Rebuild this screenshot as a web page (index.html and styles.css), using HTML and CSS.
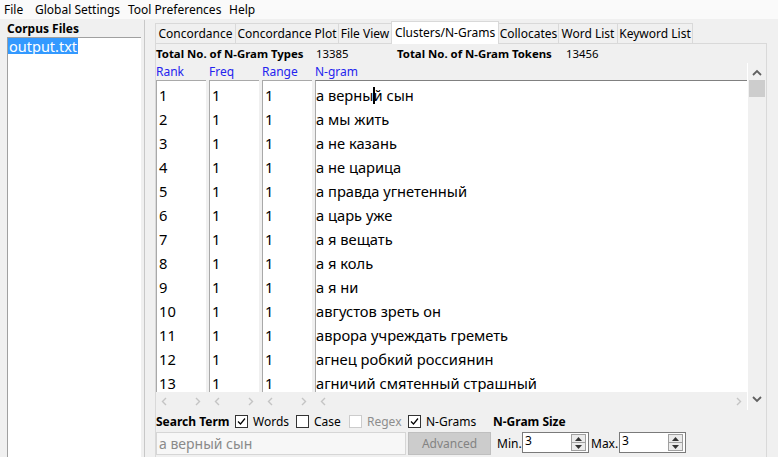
FILE: index.html
```html
<!DOCTYPE html>
<html>
<head>
<meta charset="utf-8">
<link rel="stylesheet" href="styles.css">
</head>
<body>
<div class="menubar">
  <span class="menu m-file">File</span>
  <span class="menu m-global">Global Settings</span>
  <span class="menu m-tool">Tool Preferences</span>
  <span class="menu m-help">Help</span>
</div>
<div class="main">
  <aside class="corpus">
    <div class="corpus-title">Corpus Files</div>
    <div class="corpus-list"><span class="corpus-sel">output.txt</span></div>
  </aside>
  <div class="splitter"></div>
  <section class="work">
    <nav class="tabs">
      <div class="tab t1">Concordance</div>
      <div class="tab t2">Concordance Plot</div>
      <div class="tab t3">File View</div>
      <div class="tab t4 active">Clusters/N-Grams</div>
      <div class="tab t5">Collocates</div>
      <div class="tab t6">Word List</div>
      <div class="tab t7">Keyword List</div>
    </nav>
    <div class="panel">
      <div class="totals">
        <span class="b">Total No. of N-Gram Types</span>
        <span>13385</span>
        <span class="b">Total No. of N-Gram Tokens</span>
        <span>13456</span>
      </div>
      <div class="table">
        <div class="cols">
          <div class="heads">
            <span>Rank</span><span>Freq</span><span>Range</span><span>N-gram</span>
          </div>
          <div class="boxes">
            <div class="box num">
              <div>1</div><div>2</div><div>3</div><div>4</div><div>5</div><div>6</div><div>7</div><div>8</div><div>9</div><div>10</div><div>11</div><div>12</div><div>13</div>
            </div>
            <div class="box num">
              <div>1</div><div>1</div><div>1</div><div>1</div><div>1</div><div>1</div><div>1</div><div>1</div><div>1</div><div>1</div><div>1</div><div>1</div><div>1</div>
            </div>
            <div class="box num">
              <div>1</div><div>1</div><div>1</div><div>1</div><div>1</div><div>1</div><div>1</div><div>1</div><div>1</div><div>1</div><div>1</div><div>1</div><div>1</div>
            </div>
            <div class="box text">
              <div>а верны<span class="caret"></span>й сын</div>
              <div>а мы жить</div>
              <div>а не казань</div>
              <div>а не царица</div>
              <div>а правда угнетенный</div>
              <div>а царь уже</div>
              <div>а я вещать</div>
              <div>а я коль</div>
              <div>а я ни</div>
              <div>августов зреть он</div>
              <div>аврора учреждать греметь</div>
              <div>агнец робкий россиянин</div>
              <div>агничий смятенный страшный</div>
            </div>
          </div>
          <div class="hscroll">
            <div class="hs"><svg width="6" height="9" viewBox="0 0 6 9"><polyline points="5,1 1.5,4.5 5,8" fill="none" stroke="#c4c4c4" stroke-width="1.4"/></svg><svg width="6" height="9" viewBox="0 0 6 9"><polyline points="1,1 4.5,4.5 1,8" fill="none" stroke="#c4c4c4" stroke-width="1.4"/></svg></div>
            <div class="hs"><svg width="6" height="9" viewBox="0 0 6 9"><polyline points="5,1 1.5,4.5 5,8" fill="none" stroke="#c4c4c4" stroke-width="1.4"/></svg><svg width="6" height="9" viewBox="0 0 6 9"><polyline points="1,1 4.5,4.5 1,8" fill="none" stroke="#c4c4c4" stroke-width="1.4"/></svg></div>
            <div class="hs"><svg width="6" height="9" viewBox="0 0 6 9"><polyline points="5,1 1.5,4.5 5,8" fill="none" stroke="#c4c4c4" stroke-width="1.4"/></svg><svg width="6" height="9" viewBox="0 0 6 9"><polyline points="1,1 4.5,4.5 1,8" fill="none" stroke="#c4c4c4" stroke-width="1.4"/></svg></div>
            <div class="hs"><svg width="6" height="9" viewBox="0 0 6 9"><polyline points="5,1 1.5,4.5 5,8" fill="none" stroke="#c4c4c4" stroke-width="1.4"/></svg><svg width="6" height="9" viewBox="0 0 6 9"><polyline points="1,1 4.5,4.5 1,8" fill="none" stroke="#c4c4c4" stroke-width="1.4"/></svg></div>
          </div>
        </div>
        <div class="vscroll">
          <svg class="arrow" width="10" height="7" viewBox="0 0 10 7"><polyline points="1,6 5,2 9,6" fill="none" stroke="#606060" stroke-width="1.8"/></svg>
          <div class="thumb"></div>
          <div class="track"></div>
          <svg class="arrow" width="10" height="7" viewBox="0 0 10 7"><polyline points="1,1 5,5 9,1" fill="none" stroke="#606060" stroke-width="1.8"/></svg>
        </div>
      </div>
      <div class="search">
        <div class="opts">
          <span class="b st">Search Term</span>
          <label class="cb c1"><span class="box-cb checked"><svg width="11" height="11" viewBox="0 0 11 11"><polyline points="2,5.5 4.5,8 9,2.5" fill="none" stroke="#000" stroke-width="1.2"/></svg></span>Words</label>
          <label class="cb c2"><span class="box-cb"></span>Case</label>
          <label class="cb c3 disabled"><span class="box-cb"></span>Regex</label>
          <label class="cb c4"><span class="box-cb checked"><svg width="11" height="11" viewBox="0 0 11 11"><polyline points="2,5.5 4.5,8 9,2.5" fill="none" stroke="#000" stroke-width="1.2"/></svg></span>N-Grams</label>
          <span class="b ngs">N-Gram Size</span>
        </div>
        <div class="inputs">
          <div class="term">а верный сын</div>
          <div class="adv">Advanced</div>
          <span class="lbl lmin">Min.</span>
          <div class="spin"><span class="val">3</span><span class="spbtn"><span class="up"><svg width="7" height="4" viewBox="0 0 7 4"><polygon points="0,4 3.5,0 7,4" fill="#333"/></svg></span><span class="dn"><svg width="7" height="4" viewBox="0 0 7 4"><polygon points="0,0 3.5,4 7,0" fill="#333"/></svg></span></span></div>
          <span class="lbl lmax">Max.</span>
          <div class="spin"><span class="val">3</span><span class="spbtn"><span class="up"><svg width="7" height="4" viewBox="0 0 7 4"><polygon points="0,4 3.5,0 7,4" fill="#333"/></svg></span><span class="dn"><svg width="7" height="4" viewBox="0 0 7 4"><polygon points="0,0 3.5,4 7,0" fill="#333"/></svg></span></span></div>
        </div>
      </div>
    </div>
  </section>
</div>
</body>
</html>
```

FILE: styles.css
```css
* { box-sizing: border-box; }
html, body { margin: 0; padding: 0; }
body {
  width: 778px;
  height: 457px;
  overflow: hidden;
  background: #f0f0f0;
  font-family: "Noto Sans", "Open Sans", sans-serif;
  font-size: 11px;
  color: #000;
}
.b { font-weight: bold; }

.menubar {
  height: 19px;
  background: #fafafa;
  display: flex;
  align-items: center;
  font-size: 12px;
  padding-left: 4px;
}
.menu { white-space: nowrap; }
.m-file { width: 31px; }
.m-global { width: 93px; }
.m-tool { width: 101px; }

.main {
  display: flex;
  height: 438px;
}
.corpus {
  width: 145px;
  padding-left: 7px;
  display: flex;
  flex-direction: column;
}
.corpus-title {
  font-weight: bold;
  font-size: 12px;
  height: 18px;
  line-height: 19px;
}
.corpus-list {
  width: 134px;
  flex: 1;
  background: #fff;
  border-left: 1px solid #a0a0a0;
  border-top: 1px solid #a0a0a0;
  padding: 0;
}
.corpus-sel {
  display: inline-block;
  background: #3399ff;
  color: #fff;
  font-size: 14.5px;
  line-height: 16px;
  height: 16px;
  padding: 0 1px 0 1px;
}
.splitter {
  width: 1px;
  background: #c8c8c8;
  margin-top: 1px;
}
.work {
  flex: 1;
  padding-left: 10px;
  padding-right: 11px;
  display: flex;
  flex-direction: column;
}
.tabs {
  height: 24px;
  display: flex;
  align-items: flex-end;
  position: relative;
  z-index: 1;
}
.tab {
  height: 20px;
  line-height: 19px;
  text-align: center;
  background: #f0f0f0;
  border: 1px solid #d9d9d9;
  border-bottom: none;
  margin-left: -1px;
  font-size: 12px;
  white-space: nowrap;
}
.t1 { width: 81px; margin-left: 0; }
.t2 { width: 104px; }
.t3 { width: 54px; }
.t4 { width: 108px; }
.t5 { width: 61px; }
.t6 { width: 60px; }
.t7 { width: 76px; }
.tab.active {
  background: #fff;
  height: 23px;
  margin-bottom: -1px;
  line-height: 21px;
  padding-bottom: 2px;
}
.panel {
  flex: 1;
  border: 1px solid #d9d9d9;
  border-bottom: none;
  display: flex;
  flex-direction: column;
}
.totals {
  height: 19px;
  display: grid;
  grid-template-columns: 160px 81px 169px auto;
  align-items: center;
  font-size: 11.4px;
  white-space: nowrap;
}
.table {
  display: flex;
  height: 347px;
}
.cols {
  width: 591px;
  display: flex;
  flex-direction: column;
}
.heads, .boxes, .hscroll {
  display: grid;
  grid-template-columns: 50px 50px 50px 1fr;
  column-gap: 3px;
}
.heads {
  height: 17px;
  align-items: center;
  color: #2424ee;
  font-size: 12px;
}
.boxes {
  height: 312px;
}
.box {
  background: #fff;
  border-left: 1px solid #a9a9a9;
  border-top: 1px solid #a9a9a9;
  padding-top: 2px;
  overflow: hidden;
  font-size: 14.7px;
  white-space: nowrap;
}
.box > div {
  height: 24px;
  line-height: 24px;
}
.box.num { padding-left: 2px; }
.box.text { padding-left: 0; border-top-color: #808080; }
.caret {
  display: inline-block;
  width: 2px;
  height: 17px;
  background: #000;
  vertical-align: -3px;
  margin: 0 -2px 0 0;
}
.hscroll {
  height: 18px;
  align-items: center;
}
.hs {
  display: flex;
  justify-content: space-between;
  padding: 0 5px 0 5px;
}
.hs svg { display: block; }
.hs:last-child { padding-right: 5px; }
.vscroll {
  width: 19px;
  border-left: 1px solid #fff;
  display: flex;
  flex-direction: column;
  align-items: center;
}
.vscroll .arrow { display: block; margin-top: 6px; }
.vscroll .thumb {
  width: 16px;
  height: 17px;
  background: #cdcdcd;
  margin-top: 4px;
}
.vscroll .track { flex: 1; }
.vscroll .arrow:last-child { margin: 0 0 7px 0; }

.search {
  flex: 1;
  display: flex;
  flex-direction: column;
}
.opts {
  height: 22px;
  display: flex;
  align-items: center;
  font-size: 12px;
  white-space: nowrap;
}
.st { width: 79px; }
.cb {
  display: flex;
  align-items: center;
}
.box-cb {
  width: 13px;
  height: 13px;
  border: 1px solid #333;
  background: #fff;
  margin-right: 5px;
  display: flex;
  align-items: center;
  justify-content: center;
}
.c1 { width: 61px; }
.c2 { width: 53px; }
.c3 { width: 59px; }
.c4 { width: 85px; }
.disabled { color: #8d8d8d; }
.disabled .box-cb { border-color: #cccccc; }
.inputs {
  height: 23px;
  display: flex;
  align-items: center;
  white-space: nowrap;
}
.term {
  width: 250px;
  height: 23px;
  background: #f7f7f7;
  border: 1px solid #d6d6d6;
  color: #8a8a8a;
  font-size: 14px;
  line-height: 21px;
  padding-left: 2px;
}
.adv {
  width: 83px;
  height: 23px;
  margin-left: 2px;
  background: #cccccc;
  border: 1px solid #bfbfbf;
  color: #838383;
  font-size: 12px;
  line-height: 21px;
  text-align: center;
}
.lbl { font-size: 12px; }
.lmin { margin-left: 6px; width: 25px; }
.lmax { width: 28px; margin-left: 2px; }
.spin {
  width: 67px;
  height: 21px;
  background: #fff;
  border: 1px solid #7a7a7a;
  display: flex;
  justify-content: space-between;
  margin-top: -2px;
}
.val { font-size: 12px; line-height: 15px; padding-left: 2px; }
.spbtn {
  width: 15px;
  margin: 1px 2px 1px 0;
  display: flex;
  flex-direction: column;
}
.spbtn > span {
  flex: 1;
  border: 1px solid #a0a0a0;
  background: #ebebeb;
  display: flex;
  align-items: center;
  justify-content: center;
}
.spbtn .dn { border-top: none; }
.spbtn svg { display: block; }
```
